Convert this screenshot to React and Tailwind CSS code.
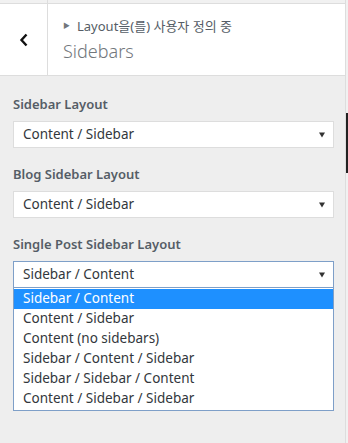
import React from 'react'

const font = { fontFamily: '"Noto Sans", "Noto Sans CJK KR", sans-serif' }

const options = [
  'Sidebar / Content',
  'Content / Sidebar',
  'Content (no sidebars)',
  'Sidebar / Content / Sidebar',
  'Sidebar / Sidebar / Content',
  'Content / Sidebar / Sidebar',
]

function Caret() {
  return (
    <svg width="6" height="6" viewBox="0 0 6 6" className="shrink-0">
      <path d="M0 0.5 H6 L3 5.5 Z" fill="#333" />
    </svg>
  )
}

function SelectBox({ value, focused }) {
  return (
    <div
      className={
        'flex h-[27px] items-center justify-between bg-white pl-[9px] pr-[8px] border ' +
        (focused ? 'border-[#7e9fc8]' : 'border-[#ddd]')
      }
    >
      <span className="text-[13.5px] text-[#32373c] leading-none">{value}</span>
      <Caret />
    </div>
  )
}

function Field({ label, value, open }) {
  return (
    <div className="flex flex-col">
      <div className="text-[13px] font-semibold text-[#555d66] leading-[20px]">{label}</div>
      <div className="mt-[7px]">
        <SelectBox value={value} focused={open} />
        {open && (
          <ul className="border border-[#7e9fc8] border-t-0 bg-white pt-[1px] pb-[1px]">
            {options.map((o, i) => (
              <li
                key={o}
                className={
                  'h-[20px] flex items-center pl-[9px] text-[13.5px] leading-none ' +
                  (i === 0 ? 'bg-[#1e90ff] text-white' : 'text-[#32373c]')
                }
              >
                {o}
              </li>
            ))}
          </ul>
        )}
      </div>
    </div>
  )
}

export default function App() {
  return (
    <div className="w-[348px] h-[443px] flex bg-[#eee] overflow-hidden" style={font}>
      <div className="flex-1 flex flex-col">
        <div className="flex h-[76px] bg-white border-b border-[#ddd]">
          <div className="w-[48px] flex flex-col border-r border-[#ddd]">
            <div className="h-[4px] bg-[#f1f1f1] border-b border-[#ddd]" />
            <button className="flex-1 flex items-center justify-center pl-[1px]">
              <svg width="10" height="14" viewBox="0 0 10 14">
                <path d="M7.5 1.5 L2.5 7 L7.5 12.5" fill="none" stroke="#111" strokeWidth="2.4" />
              </svg>
            </button>
          </div>
          <div className="flex-1 flex flex-col">
            <div className="h-[4px] bg-[#f1f1f1] border-b border-[#ddd]" />
            <div className="flex flex-col pl-[15px] pt-[13px]">
              <div className="flex items-center text-[13px] text-[#555d66] leading-[18px]">
                <span className="text-[7px] mr-[7px] text-[#72777c]">▶</span>
                <span>Layout을(를) 사용자 정의 중</span>
              </div>
              <div className="text-[18px] font-light text-[#72777c] leading-[26px] mt-[3px]">Sidebars</div>
            </div>
          </div>
        </div>
        <div className="flex flex-col gap-[16px] pl-[13px] pr-[11px] pt-[18px]">
          <Field label="Sidebar Layout" value="Content / Sidebar" />
          <Field label="Blog Sidebar Layout" value="Content / Sidebar" />
          <Field label="Single Post Sidebar Layout" value="Sidebar / Content" open />
        </div>
      </div>
      <div className="w-[3px] border-l border-[#ddd] bg-[#f1f1f1]">
        <div className="mt-[113px] h-[60px] bg-[#222]" />
      </div>
    </div>
  )
}
